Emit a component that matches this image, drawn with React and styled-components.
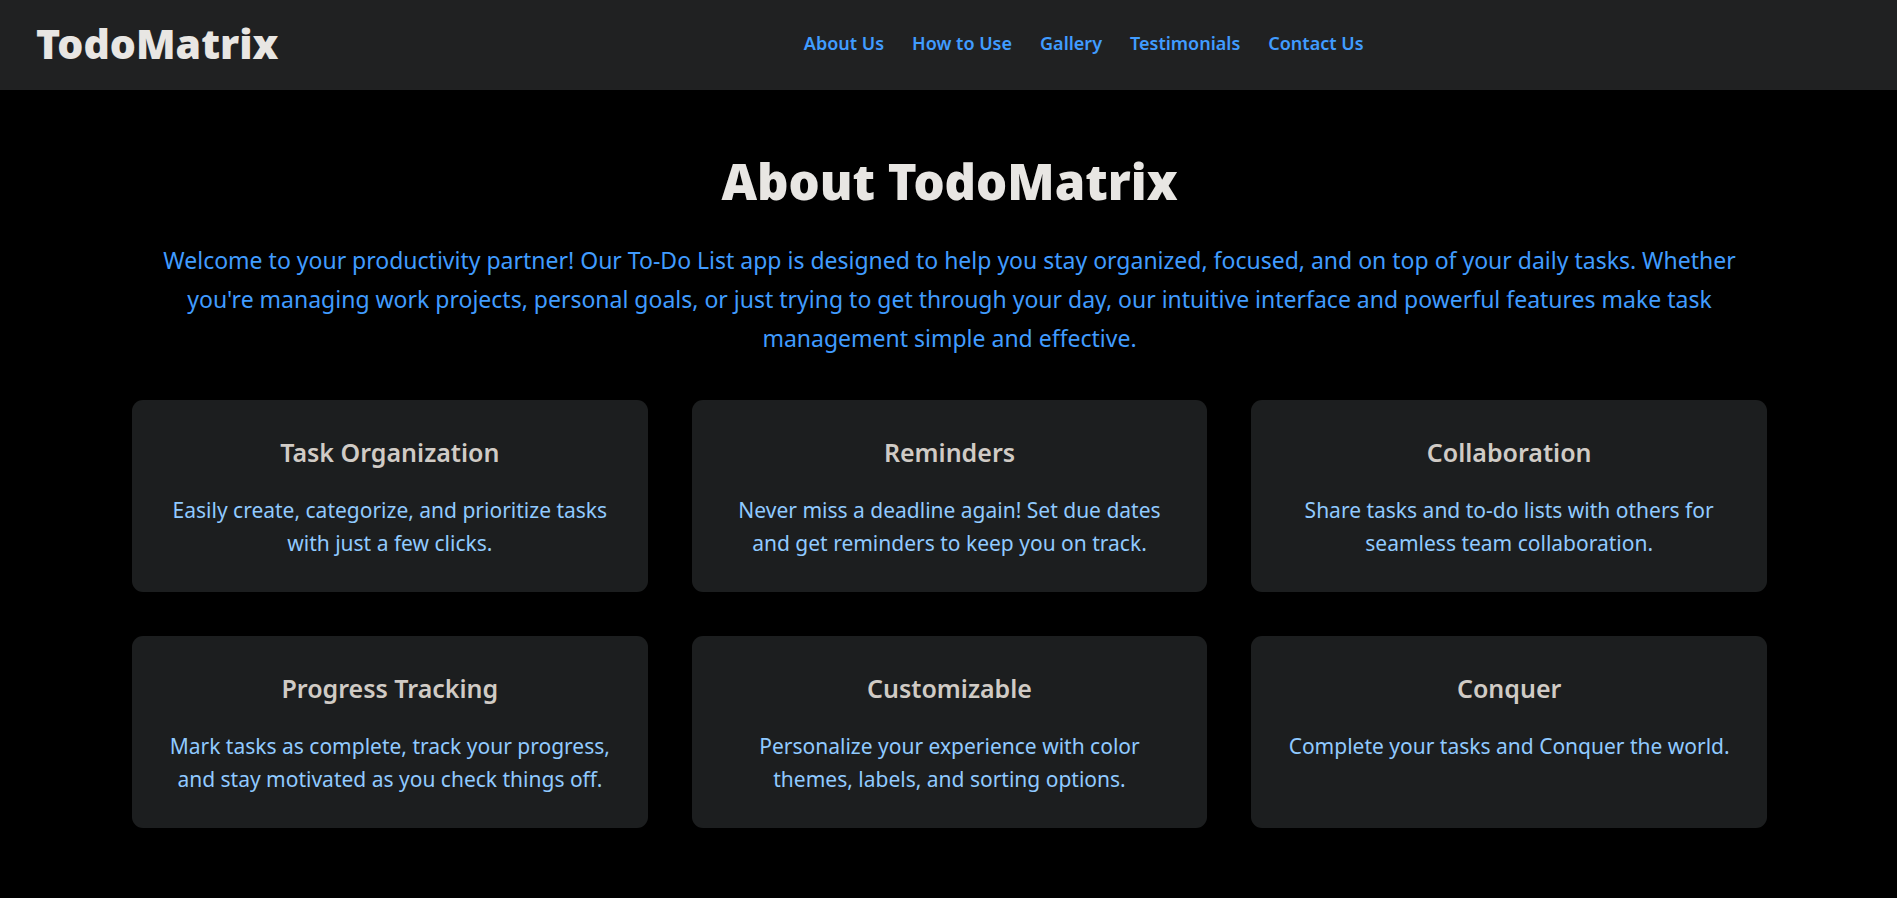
import React from "react";
import styled, { createGlobalStyle } from "styled-components";

const GlobalStyle = createGlobalStyle`
  * {
    box-sizing: border-box;
  }
  body {
    margin: 0;
    background: #000;
    font-family: "Noto Sans", "Open Sans", sans-serif;
  }
`;

const Header = styled.header`
  display: flex;
  align-items: center;
  padding: 14px 8px 18px 36px;
  background: #202122;
`;

const Logo = styled.div`
  color: #e8e6e3;
  font-size: 41px;
  font-weight: 900;
  line-height: 58px;
`;

const Nav = styled.nav`
  flex: 1;
`;

const NavList = styled.ul`
  display: flex;
  flex-wrap: wrap;
  justify-content: center;
  gap: 28px;
  margin: 0;
  padding: 0;
  list-style: none;
`;

const NavLink = styled.a`
  color: #409cff;
  font-size: 18px;
  font-weight: 600;
  line-height: 28px;
  text-decoration: none;

  &:hover {
    text-decoration: underline;
  }
`;

const About = styled.main`
  padding: 61px 130px 60px 132px;
  text-align: center;
`;

const Title = styled.h1`
  margin: 0 0 30px;
  color: #e8e6e3;
  font-size: 49px;
  font-weight: 900;
  line-height: 60px;
`;

const Intro = styled.p`
  margin: 0 0 42px;
  color: #409cff;
  font-size: 23px;
  font-weight: 400;
  line-height: 39px;
`;

const FeatureGrid = styled.section`
  display: grid;
  grid-template-columns: repeat(3, 1fr);
  gap: 44px;
`;

const FeatureCard = styled.article`
  padding: 34px 32px 32px;
  border-radius: 11px;
  background: #1c1e1f;
`;

const FeatureTitle = styled.h2`
  margin: 0 0 24px;
  color: #d0cbc5;
  font-size: 25px;
  font-weight: 600;
  line-height: 36px;
`;

const FeatureText = styled.p`
  margin: 0;
  color: #90caff;
  font-size: 21px;
  font-weight: 400;
  line-height: 33px;
`;

const links = [
  { label: "About Us", href: "#about" },
  { label: "How to Use", href: "#how-to-use" },
  { label: "Gallery", href: "#gallery" },
  { label: "Testimonials", href: "#testimonials" },
  { label: "Contact Us", href: "#contact" },
];

const features = [
  {
    title: "Task Organization",
    text: "Easily create, categorize, and prioritize tasks with just a few clicks.",
  },
  {
    title: "Reminders",
    text: "Never miss a deadline again! Set due dates and get reminders to keep you on track.",
  },
  {
    title: "Collaboration",
    text: "Share tasks and to-do lists with others for seamless team collaboration.",
  },
  {
    title: "Progress Tracking",
    text: "Mark tasks as complete, track your progress, and stay motivated as you check things off.",
  },
  {
    title: "Customizable",
    text: "Personalize your experience with color themes, labels, and sorting options.",
  },
  {
    title: "Conquer",
    text: "Complete your tasks and Conquer the world.",
  },
];

export default function App() {
  return (
    <>
      <GlobalStyle />
      <Header>
        <Logo>TodoMatrix</Logo>
        <Nav aria-label="Main">
          <NavList>
            {links.map((link) => (
              <li key={link.href}>
                <NavLink href={link.href}>{link.label}</NavLink>
              </li>
            ))}
          </NavList>
        </Nav>
      </Header>
      <About id="about">
        <Title>About TodoMatrix</Title>
        <Intro>
          Welcome to your productivity partner! Our To-Do List app is designed
          to help you stay organized, focused, and on top of your daily tasks.
          Whether you're managing work projects, personal goals, or just trying
          to get through your day, our intuitive interface and powerful features
          make task management simple and effective.
        </Intro>
        <FeatureGrid>
          {features.map((feature) => (
            <FeatureCard key={feature.title}>
              <FeatureTitle>{feature.title}</FeatureTitle>
              <FeatureText>{feature.text}</FeatureText>
            </FeatureCard>
          ))}
        </FeatureGrid>
      </About>
    </>
  );
}
